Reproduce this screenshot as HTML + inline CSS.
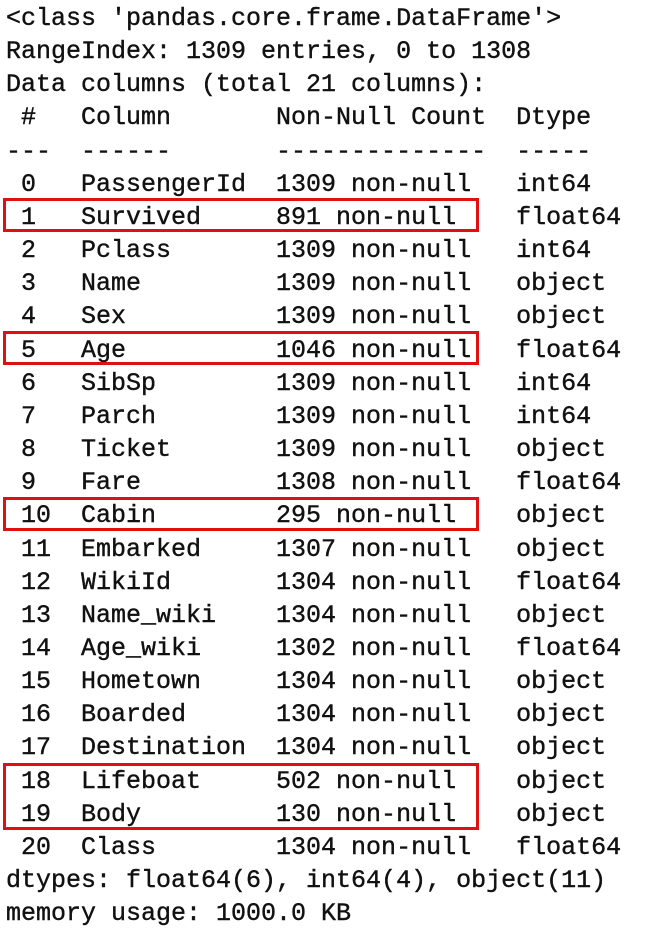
<!DOCTYPE html>
<html><head><meta charset="utf-8"><style>
html,body{margin:0;padding:0;background:#fff;width:660px;height:943px;overflow:hidden}
pre{position:absolute;left:6px;top:2px;margin:0;font-family:"Liberation Mono",monospace;font-size:25px;line-height:33.15px;color:#111;-webkit-text-stroke:0.4px #111}
.b{position:absolute;border:3px solid #e01010;box-sizing:border-box}
</style></head><body>
<pre>&lt;class 'pandas.core.frame.DataFrame'&gt;
RangeIndex: 1309 entries, 0 to 1308
Data columns (total 21 columns):
 #   Column       Non-Null Count  Dtype
---  ------       --------------  -----
 0   PassengerId  1309 non-null   int64
 1   Survived     891 non-null    float64
 2   Pclass       1309 non-null   int64
 3   Name         1309 non-null   object
 4   Sex          1309 non-null   object
 5   Age          1046 non-null   float64
 6   SibSp        1309 non-null   int64
 7   Parch        1309 non-null   int64
 8   Ticket       1309 non-null   object
 9   Fare         1308 non-null   float64
 10  Cabin        295 non-null    object
 11  Embarked     1307 non-null   object
 12  WikiId       1304 non-null   float64
 13  Name_wiki    1304 non-null   object
 14  Age_wiki     1302 non-null   float64
 15  Hometown     1304 non-null   object
 16  Boarded      1304 non-null   object
 17  Destination  1304 non-null   object
 18  Lifeboat     502 non-null    object
 19  Body         130 non-null    object
 20  Class        1304 non-null   float64
dtypes: float64(6), int64(4), object(11)
memory usage: 1000.0 KB</pre>
<div class="b" style="left:3px;top:198px;width:476px;height:34px"></div>
<div class="b" style="left:3px;top:331px;width:476px;height:34px"></div>
<div class="b" style="left:3px;top:497px;width:476px;height:34px"></div>
<div class="b" style="left:3px;top:763px;width:476px;height:67px"></div>
</body></html>
